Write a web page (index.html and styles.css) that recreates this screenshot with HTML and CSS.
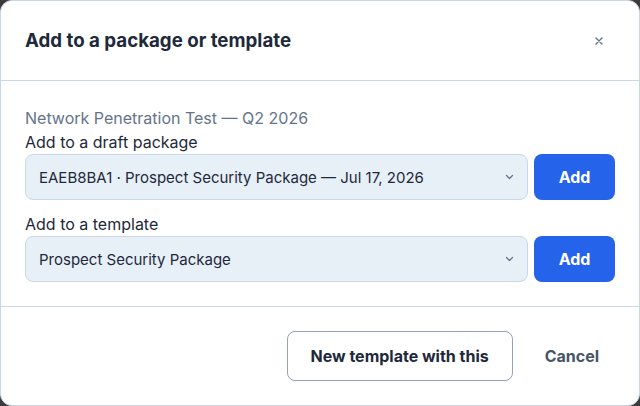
FILE: index.html
```html
<!DOCTYPE html>
<html lang="en">
<head>
    <meta charset="UTF-8">
    <meta name="viewport" content="width=device-width, initial-scale=1.0">
    <title>Add to a package or template</title>
    <link rel="stylesheet" href="styles.css">
</head>
<body>
    <div class="modal">
        <div class="modal-header">
            <h2>Add to a package or template</h2>
            <button class="close-btn" aria-label="Close">
                <svg width="8" height="8" viewBox="0 0 8 8"><path d="M1 1L7 7M7 1L1 7" stroke="#64748b" stroke-width="1.4" stroke-linecap="round"/></svg>
            </button>
        </div>

        <div class="modal-body">
            <p class="item-name">Network Penetration Test — Q2 2026</p>

            <label class="field-label">Add to a draft package</label>
            <div class="field-row">
                <div class="select">
                    <span>EAEB8BA1 · Prospect Security Package — Jul 17, 2026</span>
                    <svg width="9" height="6" viewBox="0 0 9 6"><path d="M1.5 1.5L4.5 4.5L7.5 1.5" fill="none" stroke="#64748b" stroke-width="1.3" stroke-linecap="round" stroke-linejoin="round"/></svg>
                </div>
                <button class="btn-primary">Add</button>
            </div>

            <label class="field-label spaced">Add to a template</label>
            <div class="field-row">
                <div class="select">
                    <span>Prospect Security Package</span>
                    <svg width="9" height="6" viewBox="0 0 9 6"><path d="M1.5 1.5L4.5 4.5L7.5 1.5" fill="none" stroke="#64748b" stroke-width="1.3" stroke-linecap="round" stroke-linejoin="round"/></svg>
                </div>
                <button class="btn-primary">Add</button>
            </div>
        </div>

        <div class="modal-footer">
            <button class="btn-outline">New template with this</button>
            <button class="btn-text">Cancel</button>
        </div>
    </div>
</body>
</html>
```

FILE: styles.css
```css
body {
    font-family: Inter, "Noto Sans", sans-serif;
    background: #3b3b3b;
    color: #1e293b;
    margin: 0;
    padding: 0;
}
button {
    font-family: inherit;
    cursor: pointer;
}
.modal {
    box-sizing: border-box;
    width: 640px;
    height: 406px;
    background: #fff;
    border: 1px solid #c8d6e5;
    border-radius: 12px;
    overflow: hidden;
}
.modal-header {
    height: 79px;
    padding: 0 24px;
    display: flex;
    align-items: center;
    justify-content: space-between;
    border-bottom: 1px solid #c8d6e5;
}
.modal-header h2 {
    margin: 0;
    font-size: 18.7px;
    font-weight: 700;
    color: #1e293b;
}
.close-btn {
    background: none;
    border: none;
    padding: 4px;
    margin-right: 8px;
    display: flex;
}
.modal-body {
    padding: 25px 24px 24px;
    border-bottom: 1px solid #c8d6e5;
}
.item-name {
    margin: 0;
    font-size: 16px;
    line-height: 24px;
    color: #64748b;
}
.field-label {
    display: block;
    font-size: 16px;
    line-height: 24px;
    color: #1e293b;
}
.field-label.spaced {
    margin-top: 12px;
}
.field-row {
    display: flex;
    gap: 6px;
}
.select {
    flex: 1;
    height: 46px;
    box-sizing: border-box;
    padding: 0 13px;
    display: flex;
    align-items: center;
    justify-content: space-between;
    background: #e7eff7;
    border: 1px solid #c9d7e6;
    border-radius: 8px;
    font-size: 15px;
    color: #1e293b;
}
.btn-primary {
    width: 81px;
    height: 46px;
    background: #2563eb;
    border: none;
    border-radius: 8px;
    color: #fff;
    font-size: 16px;
    font-weight: 700;
}
.modal-footer {
    padding: 24px;
    display: flex;
    justify-content: flex-end;
    gap: 16px;
}
.btn-outline {
    width: 226px;
    height: 50px;
    background: #fff;
    border: 1px solid #94a3b8;
    border-radius: 8px;
    color: #1e293b;
    font-size: 16px;
    font-weight: 700;
}
.btn-text {
    background: none;
    border: none;
    padding: 0 16px;
    color: #475569;
    font-size: 16px;
    font-weight: 700;
}
```
